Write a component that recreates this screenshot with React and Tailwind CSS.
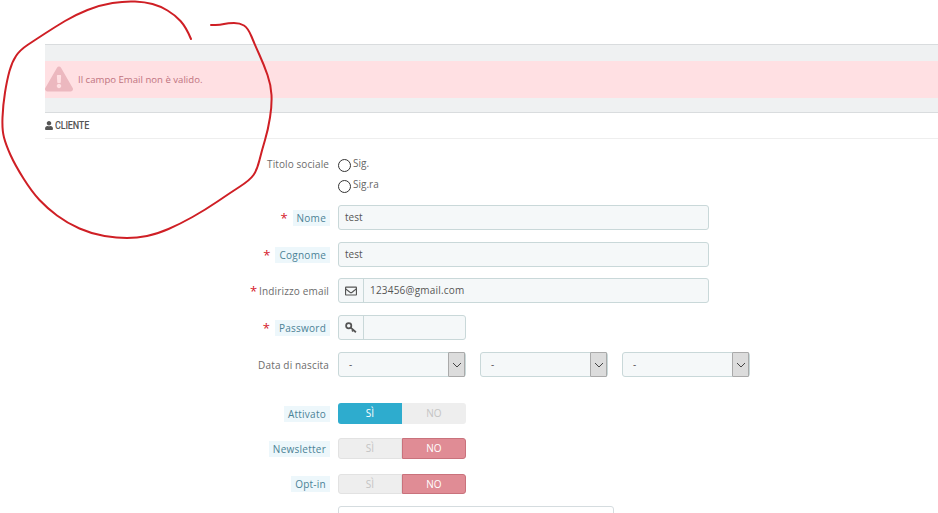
import { FaUser, FaExclamationTriangle, FaRegEnvelope } from "react-icons/fa";

// points traced from the hand-drawn circle
const circle = [
  [191, 39], [186, 27], [175, 15], [160, 6], [145, 2], [125, 1], [100, 5], [75, 15], [55, 27], [35, 40], [20, 50],
  [12, 62], [7, 80], [3, 105], [2, 130], [6, 145], [15, 165], [32, 192], [47, 208], [67, 223], [92, 234], [117, 238],
  [137, 238], [157, 234], [180, 224], [205, 210], [230, 193], [250, 180], [257, 170], [262, 150], [268, 130], [272, 105],
  [271, 85], [264, 65], [255, 45], [248, 28], [240, 23], [228, 23], [220, 25], [211, 25],
];

function smoothPath(points) {
  let d = `M${points[0][0]} ${points[0][1]}`;
  for (let i = 1; i < points.length - 1; i++) {
    const mx = (points[i][0] + points[i + 1][0]) / 2;
    const my = (points[i][1] + points[i + 1][1]) / 2;
    d += `Q${points[i][0]} ${points[i][1]} ${mx} ${my}`;
  }
  const last = points[points.length - 1];
  return d + `L${last[0]} ${last[1]}`;
}

function Row({ label, required, hint, className, children }) {
  return (
    <div className={"flex items-center gap-[9px] " + className}>
      <div className="w-[284px] flex justify-end items-center text-[10px] leading-4 text-[#6c6c6c]">
        {required && <span className={"text-[#d5182a] text-[13px] " + (hint ? "mr-[5px]" : "mr-[2px]")}>*</span>}
        {hint ? (
          <span className="bg-[#edf7fb] text-[#4b8296] px-[4px] mr-[-1px] tracking-[0.25px]">{label}</span>
        ) : (
          <span className="tracking-[0.15px]">{label}</span>
        )}
      </div>
      {children}
    </div>
  );
}

function Field({ value, width = "w-[371px]" }) {
  return (
    <div className={width + " h-[25px] bg-[#f5f8f9] border border-[#c9d8d9] rounded-[3px] px-[6px] flex items-center text-[10px] text-[#555]"}>
      {value}
    </div>
  );
}

function IconField({ icon, value, width }) {
  return (
    <div className={width + " h-[25px] bg-[#f5f8f9] border border-[#c9d8d9] rounded-[3px] flex items-center text-[10px] text-[#555]"}>
      <div className="w-[25px] h-full border-r border-[#c9d8d9] flex items-center justify-center text-[#555] text-[12px]">
        {icon}
      </div>
      <span className="pl-[6px] tracking-[0.2px]">{value}</span>
    </div>
  );
}

function KeyIcon() {
  return (
    <svg width="12" height="12" viewBox="0 0 11 11" fill="none" stroke="#555" strokeWidth="1.6">
      <circle cx="3.4" cy="3.4" r="2.4" />
      <path d="M5.2 5.2l4.8 4.2M7.6 7.4l-1.2 1.2" />
    </svg>
  );
}

function Select() {
  return (
    <div className="w-[128px] h-[25px] bg-[#f5f8f9] border border-[#c9d8d9] rounded-[3px] flex items-center justify-between text-[10px] text-[#555]">
      <span className="pl-[10px]">-</span>
      <div className="w-[17px] h-[25px] bg-[#dcdcdc] border border-[#aaa] rounded-[1px] flex items-center justify-center">
        <svg width="10" height="6" viewBox="0 0 10 6" fill="none" stroke="#444" strokeWidth="1">
          <path d="M1 1l4 4 4-4" />
        </svg>
      </div>
    </div>
  );
}

function Toggle({ on, height = "h-[21px]" }) {
  return (
    <div className={"w-[128px] flex text-[10px] " + height}>
      <div className={on
        ? "w-1/2 bg-[#2eacce] text-white rounded-l-[3px] flex items-center justify-center"
        : "w-1/2 bg-[#eeeeee] border border-[#e2e2e2] text-[#c4c4c4] rounded-l-[3px] flex items-center justify-center"}>
        SÌ
      </div>
      <div className={on
        ? "w-1/2 bg-[#eeeeee] text-[#c4c4c4] rounded-r-[3px] flex items-center justify-center"
        : "w-1/2 bg-[#e08c95] border border-[#c9727c] text-white rounded-r-[3px] flex items-center justify-center"}>
        NO
      </div>
    </div>
  );
}

function Radio({ label, className }) {
  return (
    <div className={"flex items-center gap-[2px] text-[10px] text-[#666] " + className}>
      <span className="w-[13px] h-[13px] rounded-full border border-[#333] bg-white mt-[2px]"></span>
      <span className="-mt-[3px]">{label}</span>
    </div>
  );
}

export default function App() {
  return (
    <div className="relative w-[938px] h-[513px] overflow-hidden bg-white font-['Open_Sans',sans-serif]">
      <div className="ml-[45px] pt-[44px]">
        {/* Alert */}
        <div className="h-[69px] bg-[#eff1f2] border-t border-b border-[#d9dcde] pt-[16px]">
          <div className="h-[37px] bg-[#ffe0e3] flex items-center text-[9.6px] text-[#c0737f] overflow-hidden">
            <FaExclamationTriangle className="text-[28px] text-[#ecb8bf] -mt-[1px]" />
            <span className="ml-[5px] mt-[1px]">Il campo Email non è valido.</span>
          </div>
        </div>

        {/* Heading */}
        <div className="h-[26px] border-b border-[#eeeeee] flex items-center gap-[2px] text-[#555]">
          <FaUser className="text-[9px] w-[8px]" />
          <span className="font-['Roboto',sans-serif] font-medium text-[11px] tracking-[-0.2px] scale-x-[0.82] origin-left mt-[1px]">CLIENTE</span>
        </div>

        {/* Form */}
        <div className="pt-[15px]">
          <div className="flex gap-[9px] h-[51px]">
            <div className="w-[284px] text-right text-[10px] leading-4 text-[#6c6c6c] pt-[2px] tracking-[0.1px]">Titolo sociale</div>
            <div className="flex flex-col">
              <Radio label="Sig." className="h-[21px]" />
              <Radio label="Sig.ra" className="h-[21px]" />
            </div>
          </div>
          <Row label="Nome" required hint className="mb-[12px]"><Field value="test" /></Row>
          <Row label="Cognome" required hint className="mb-[11px]"><Field value="test" /></Row>
          <Row label="Indirizzo email" required className="mb-[12px]">
            <IconField icon={<FaRegEnvelope />} value="123456@gmail.com" width="w-[371px]" />
          </Row>
          <Row label="Password" required hint className="mb-[12px]">
            <IconField icon={<KeyIcon />} value="" width="w-[128px]" />
          </Row>
          <Row label="Data di nascita" className="mb-[26px]">
            <div className="flex gap-[14px]">
              <Select />
              <Select />
              <Select />
            </div>
          </Row>
          <Row label="Attivato" hint className="mb-[14px]"><Toggle on /></Row>
          <Row label="Newsletter" hint className="mb-[15px]"><Toggle /></Row>
          <Row label="Opt-in" hint className="mb-[12px]"><Toggle height="h-[20px]" /></Row>
          <Row className=""><div className="w-[276px] h-[30px] border border-[#d5dcdf] rounded-[3px] bg-white"></div></Row>
        </div>
      </div>

      {/* Hand-drawn circle over the alert */}
      <svg className="absolute left-0 top-0 pointer-events-none" width="938" height="513" fill="none" stroke="#cf1f25" strokeWidth="2" strokeLinecap="round" strokeLinejoin="round">
        <path d={smoothPath(circle)} />
      </svg>
    </div>
  );
}
